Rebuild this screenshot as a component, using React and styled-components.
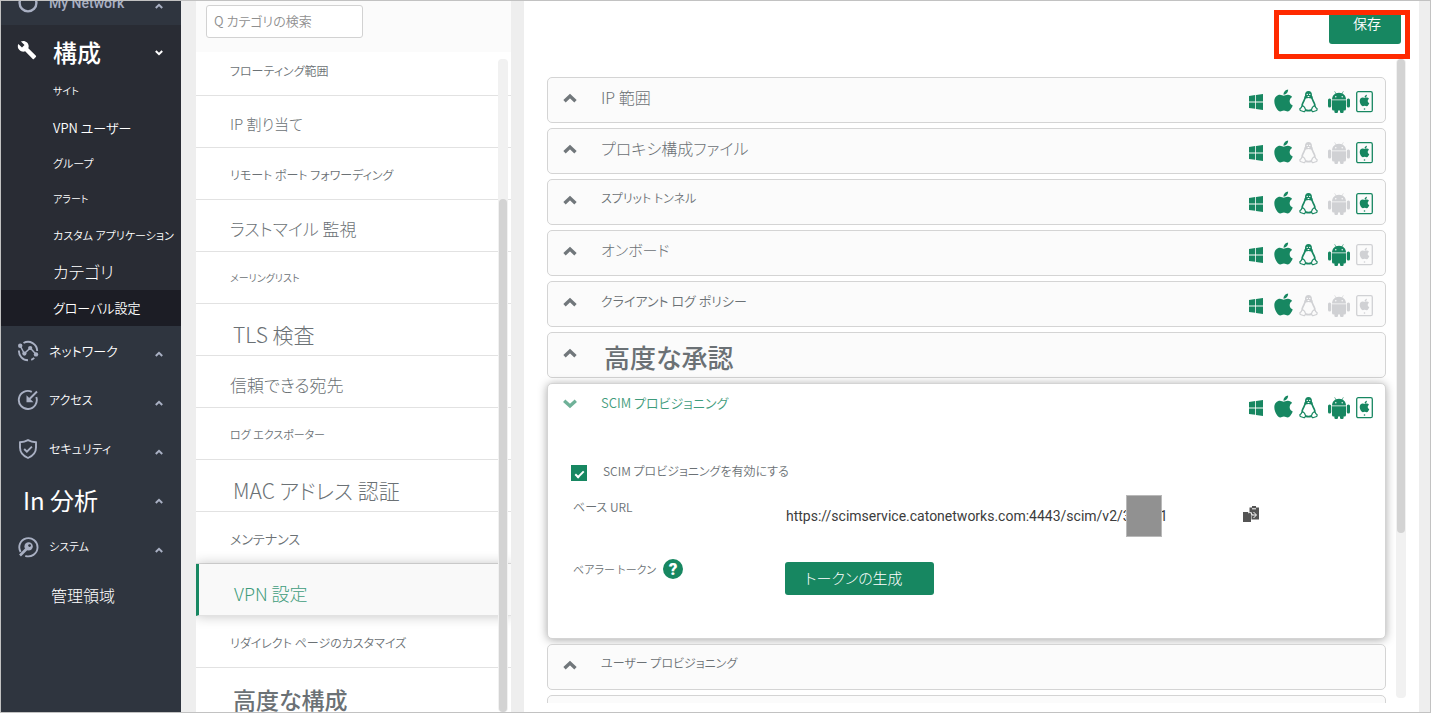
import React from "react";
import styled, { createGlobalStyle, css } from "styled-components";
import { MdBuild } from "react-icons/md";
import { FaApple } from "react-icons/fa";

const GREEN = "#178761";
const GREY = "#d0d1d4";
const NAV_ICON = "#a9b0c3";

const GlobalStyle = createGlobalStyle`
  *, *::before, *::after { box-sizing: border-box; }
  body {
    margin: 0;
    font-family: "Noto Sans CJK JP", "Liberation Sans", sans-serif;
    font-weight: 350;
    font-feature-settings: "palt";
    background: #eeeeee;
  }
  button, input {
    font: inherit;
    font-feature-settings: inherit;
    color: inherit;
    margin: 0;
  }
  button {
    border: 0;
    padding: 0;
    background: none;
    text-align: left;
  }
  a { color: inherit; text-decoration: none; }
`;

const Shell = styled.div`
  display: grid;
  grid-template-columns: 180px 315px minmax(0, 1fr);
  grid-template-rows: minmax(0, 1fr);
  height: 100vh;
  padding-right: 11px;
  border: 1px solid #c2c2c2;
  background: #eeeeee;
  overflow: hidden;
`;

/* ---------- text ---------- */

/* Small labels take a slightly stronger weight so that they stay legible. */
const Text = styled.span`
  font-size: ${(p) => p.$size}px;
  line-height: ${(p) => p.$size}px;
  font-weight: ${(p) => p.$weight || (p.$size >= 15 ? 300 : 350)};
  white-space: nowrap;
`;

/* Large labels are inset a little further than the others in a list. */
const ListText = styled(Text)`
  padding-left: ${(p) => (p.$size >= 20 ? 3 : 0)}px;
`;

/* ---------- side navigation ---------- */

const Sidebar = styled.nav`
  display: flex;
  flex-direction: column;
  background: #2f353f;
  color: #ffffff;
  overflow: hidden;
`;

const NavSection = styled.button`
  display: flex;
  align-items: center;
  flex: none;
  width: 100%;
  height: 49px;
  padding: 0 18px 0 ${(p) => (p.$wide ? 22 : 16)}px;
`;

const ScrolledSection = styled(NavSection)`
  margin-top: -25px;
  padding-top: 4px;
  font-family: Roboto, sans-serif;
  color: ${NAV_ICON};
`;

const NavLabel = styled(Text)`
  padding-top: ${(p) => (p.$size >= 20 ? 5 : 0)}px;
`;

const NavIcon = styled.span`
  display: flex;
  width: 22px;
  margin-right: ${(p) => (p.$wide ? 14 : 10)}px;
`;

const NavArrow = styled.span`
  display: flex;
  margin-left: auto;
  padding-top: 6px;
  color: ${(p) => (p.$light ? "#ffffff" : NAV_ICON)};
`;

const NavGroup = styled.div`
  flex: none;
  background: #292c34;
`;

const NavLink = styled.a`
  display: flex;
  align-items: center;
  height: 36px;
  padding: 0 0 2px 52px;
  background: ${(p) => (p.$active ? "#1c1d25" : "transparent")};
`;

const NavPlain = styled(NavLink)`
  flex: none;
  height: 49px;
  padding-left: 50px;
`;

/* ---------- category panel ---------- */

const Categories = styled.section`
  position: relative;
  display: flex;
  flex-direction: column;
  margin-left: 15px;
  width: 315px;
  background: #ffffff;
  overflow: hidden;
`;

const CategoryHeader = styled.div`
  z-index: 1;
  flex: none;
  height: 51px;
  padding: 4px 10px;
  background: #fbfbfb;
`;

const SearchBox = styled.input`
  display: block;
  width: 157px;
  height: 33px;
  padding: 0 7px 2px;
  border: 1px solid #d2d2d2;
  border-radius: 3px;
  background: #ffffff;
  font-size: 13px;
  outline: none;
  &::placeholder { color: #8f8f8f; opacity: 1; }
`;

const CategoryList = styled.div`
  margin-top: -8px;
`;

const CategoryRow = styled.a`
  display: flex;
  align-items: flex-start;
  height: 52px;
  padding: 20px 0 0 34px;
  border-bottom: 1px solid #e2e2e2;
  color: #6b7175;
  ${(p) =>
    p.$active &&
    css`
      position: relative;
      padding-left: 35px;
      border-left: 3px solid ${GREEN};
      background: #f9f9f9;
      color: #3f9c7c;
      box-shadow: 0 0 12px rgba(0, 0, 0, 0.24);
    `}
`;

const CategoryText = styled(ListText)`
  padding-top: ${(p) => (p.$size <= 12 ? 1 : 0)}px;
`;

const Track = styled.div`
  position: absolute;
  z-index: 2;
  top: 58px;
  bottom: ${(p) => p.$bottom}px;
  right: ${(p) => p.$right}px;
  width: 10px;
  padding: ${(p) => p.$before}px 1px ${(p) => p.$after}px;
  border-radius: 4px;
  background: #f1f1f1;
`;

const Thumb = styled.div`
  height: 100%;
  border-radius: 4px;
  background: #d3d3d3;
`;

/* ---------- settings panel ---------- */

const Main = styled.main`
  position: relative;
  display: flex;
  flex-direction: column;
  min-width: 0;
  margin-left: 28px;
  padding-bottom: 9px;
  background: #ffffff;
`;

const Toolbar = styled.header`
  display: flex;
  justify-content: flex-end;
  flex: none;
  height: 58px;
  padding: 10px 18px 0 0;
`;

const PrimaryButton = styled.button`
  display: flex;
  align-items: flex-start;
  height: 33px;
  padding: ${(p) => p.$padTop}px ${(p) => p.$padRight}px 0 ${(p) => p.$padLeft}px;
  border-radius: 3px;
  background: ${GREEN};
  color: #ffffff;
`;

const Highlight = styled.div`
  position: absolute;
  z-index: 3;
  top: 9px;
  right: 9px;
  width: 136px;
  height: 49px;
  border: 5px solid #ff2a00;
`;

const CardList = styled.div`
  display: flex;
  flex-direction: column;
  gap: 5px;
  flex: 1;
  min-height: 0;
  padding: 18px 33px 0 23px;
  overflow: hidden;
`;

const Card = styled.section`
  flex: none;
  border: 1px solid #d4d4d4;
  border-radius: 5px;
  background: #fbfbfb;
  color: #6b7175;
  ${(p) =>
    p.$open &&
    css`
      height: 256px;
      background: #ffffff;
      box-shadow: 0 1px 10px rgba(0, 0, 0, 0.34);
    `}
`;

const CardHeader = styled.button`
  display: flex;
  align-items: flex-start;
  width: 100%;
  height: 44px;
  padding: 11px 12px 0 15px;
`;

const CardArrow = styled.span`
  display: flex;
  width: 38px;
  padding-top: 4px;
  color: ${(p) => (p.$open ? "#6fb198" : "#71777b")};
`;

const CardTitle = styled(ListText)`
  padding-top: ${(p) => (p.$size <= 13 ? 1 : 0)}px;
  color: ${(p) => (p.$open ? "#3f9c7c" : "inherit")};
`;

const Platforms = styled.span`
  display: grid;
  grid-template-columns: 14px 24px 19px 26px 17px;
  column-gap: 6px;
  align-items: center;
  height: 22px;
  margin-left: auto;
`;

const Platform = styled.span`
  display: flex;
  justify-content: flex-end;
  color: ${(p) => (p.$on ? GREEN : GREY)};
`;

const CardBody = styled.div`
  display: flex;
  flex-direction: column;
  padding: 37px 126px 0 23px;
`;

const CheckRow = styled.label`
  display: flex;
  align-items: flex-start;
  gap: 16px;
  height: 18px;
`;

const Checkbox = styled.input`
  appearance: none;
  display: flex;
  align-items: center;
  justify-content: center;
  width: 16px;
  height: 16px;
  background: ${GREEN};
  &:checked::after {
    content: "";
    width: 9px;
    height: 5px;
    border: solid #ffffff;
    border-width: 0 0 2px 2px;
    transform: rotate(-45deg);
  }
`;

const Field = styled.div`
  display: grid;
  grid-template-columns: 214px minmax(0, 1fr);
  align-items: center;
  height: ${(p) => p.$height}px;
`;

const FieldLabel = styled.span`
  display: flex;
  align-items: center;
  gap: 7px;
  padding: 0 0 18px 2px;
`;

const UrlLine = styled.div`
  display: flex;
  align-items: center;
  padding-left: 1px;
  font-family: Roboto, sans-serif;
  font-size: 14px;
  font-weight: 400;
  color: #3c3c3c;
  white-space: nowrap;
`;

const Redaction = styled.span`
  z-index: 1;
  width: 36px;
  height: 42px;
  margin: 0 -2px 0 -5px;
  border: 1px solid #b9b9b9;
  background: #919191;
`;

const CopyButton = styled.button`
  display: flex;
  margin-left: auto;
  padding-bottom: 5px;
  color: #545454;
`;

const HelpButton = styled.button`
  width: 20px;
  height: 20px;
  border-radius: 50%;
  background: ${GREEN};
  color: #ffffff;
  font-family: Roboto, sans-serif;
  font-size: 17px;
  line-height: 20px;
  font-weight: 900;
  text-align: center;
`;

/* ---------- icons ---------- */

const SmallArrow = ({ down }) => (
  <svg width="8" height="6" viewBox="0 0 8 6" fill="none" stroke="currentColor" strokeWidth="2">
    <path d={down ? "M.8 1 4 4.2 7.2 1" : "M.8 5 4 1.8 7.2 5"} />
  </svg>
);

const BigArrow = ({ down }) => (
  <svg width="14" height="10" viewBox="0 0 14 10" fill="none" stroke="currentColor" strokeWidth="3.4">
    <path d={down ? "M1.200 1.800l5.800 5.200 5.800-5.200" : "M1.500 8.200 7 3l5.500 5.200"} />
  </svg>
);

const RingIcon = () => (
  <svg width="22" height="22" viewBox="0 0 22 22" fill="none" stroke={NAV_ICON} strokeWidth="2.4">
    <circle cx="11" cy="11" r="8.400" />
  </svg>
);

const NetworkIcon = () => (
  <svg width="22" height="22" viewBox="0 0 22 22" fill="none" stroke={NAV_ICON} strokeWidth="1.900">
    <path d="M6.500 3A9.200 9.200 0 0 1 20.200 11M17.200 17.800a9.200 9.200 0 0 1-3 2M11 20.200A9.200 9.200 0 0 1 1.900 10.500" />
    <path d="M3.300 6l4 7.500 6-5.500 5.700 6.200" strokeWidth="1.500" />
    <g fill={NAV_ICON} stroke="none">
      <circle cx="3.200" cy="5.800" r="2.200" />
      <circle cx="7.400" cy="13.600" r="2.100" />
      <circle cx="13.200" cy="8" r="2.100" />
      <circle cx="19" cy="14.400" r="2.200" />
    </g>
  </svg>
);

const AccessIcon = () => (
  <svg width="22" height="22" viewBox="0 0 22 22" fill="none" stroke={NAV_ICON} strokeWidth="1.900">
    <path d="M14.800 2.900A9 9 0 1 0 19.300 8" />
    <path d="M20 2.500l-8 8" />
    <path d="M9.500 6.200v7h7z" fill={NAV_ICON} stroke="none" />
  </svg>
);

const ShieldIcon = () => (
  <svg width="22" height="22" viewBox="0 0 22 22" fill="none" stroke={NAV_ICON} strokeWidth="1.900">
    <path d="M11 2.200c2.500 1.400 5 2 8 2.100v5.200c0 4.900-2.900 8.300-8 10.500-5.100-2.200-8-5.600-8-10.500V4.300c3-.1 5.500-.7 8-2.100z" />
    <path d="M7.200 11l2.700 2.600 5-5" />
  </svg>
);

const SystemIcon = () => (
  <svg width="22" height="22" viewBox="0 0 22 22" fill="none" stroke={NAV_ICON} strokeWidth="1.900">
    <path d="M3.600 15.900A9.100 9.100 0 1 1 8.300 19.800" />
    <path d="M3 19.500l6.500-6.500" strokeWidth="2.600" />
    <circle cx="11.600" cy="10.400" r="4.200" fill={NAV_ICON} stroke="none" />
    <circle cx="12.600" cy="9.600" r="1.400" fill="#2f353f" stroke="none" />
  </svg>
);

const WindowsIcon = () => (
  <svg width="14" height="16" viewBox="0 0 14 16" fill="currentColor">
    <path d="M0 2l6.200-.9v6.400H0zM7 1l7-1v7.500H7zM0 8.400h6.200v6.400L0 14zM7 8.400h7V16l-7-1z" />
  </svg>
);

const AppleIcon = () => (
  <svg width="20" height="25" viewBox="0 0 20 25">
    <FaApple x="-2" y="-1" size={25} />
  </svg>
);

const LinuxIcon = () => (
  <svg width="20" height="23" viewBox="0 0 20 23" fill="none" stroke="currentColor" strokeWidth="1.300" strokeLinejoin="round">
    <path d="M6.700 6C7 9 4 11.500 3.200 15.500M13.300 6c-.3 3 2.700 5.500 3.500 9.500M7 20.600c2 .7 4 .7 6 0" strokeWidth="1.800" />
    <path d="M6.300 5.500C6.100 2.300 7.500.4 10 .4s3.900 1.900 3.700 5.100l.6 3.200L10 7.700 5.700 8.700z" fill="currentColor" stroke="none" />
    <path d="M3.400 15.500l-1 2.300-1.600 1.500.6 1.700 4 1.300 1.800-1.600-1.500-3.300zM16.600 15.500l1 2.300 1.600 1.500-.6 1.700-4 1.300-1.800-1.600 1.500-3.300z" />
    <circle cx="8.700" cy="4" r=".7" fill="#fff" stroke="none" />
    <circle cx="11.300" cy="4" r=".7" fill="#fff" stroke="none" />
    <path d="M8.500 5.700h3L10 7z" fill="#fff" stroke="none" />
  </svg>
);

const AndroidIcon = () => (
  <svg width="22" height="22" viewBox="0 0 22 22" fill="currentColor">
    <path d="M4 8.500C4.200 4.600 6.800 1.800 11 1.800s6.800 2.800 7 6.700z" />
    <path d="M6.600.3l1.700 2.700M15.400.3l-1.700 2.700" stroke="currentColor" strokeWidth=".6" />
    <path d="M4 9.300h14v8.700a1.500 1.500 0 0 1-1.500 1.500h-11A1.500 1.500 0 0 1 4 18z" />
    <rect x="0" y="7.500" width="3.200" height="9" rx="1.500" />
    <rect x="18.800" y="7.500" width="3.200" height="9" rx="1.500" />
    <rect x="6.400" y="17" width="3.600" height="5" rx="1.200" />
    <rect x="12" y="17" width="3.600" height="5" rx="1.200" />
    <circle cx="7.800" cy="5.700" r=".7" fill="#fff" />
    <circle cx="14.200" cy="5.700" r=".7" fill="#fff" />
  </svg>
);

const TabletIcon = () => (
  <svg width="17" height="22" viewBox="0 0 17 22" fill="none">
    <rect x=".7" y=".7" width="15.600" height="20" rx="1.500" stroke="currentColor" strokeWidth="1.300" />
    <circle cx="8.500" cy="18" r=".8" fill="currentColor" />
    <FaApple x="2" y="3" size={13} color="currentColor" />
  </svg>
);

const CopyIcon = () => (
  <svg width="16" height="16" viewBox="0 0 16 16" fill="currentColor">
    <path d="M0 6h8v10H0zM6.500 1.500H9V0h4v1.500h3v12H8.500V6h-2z" />
    <path d="M5 6.800c2.500-.8 4 .3 4 2.200h4M10.500 6l3 3-3 3M9 2.800h4" fill="none" stroke="#fff" strokeWidth="1" />
  </svg>
);

/* ---------- data ---------- */

const configLinks = [
  ["サイト", 10],
  ["VPN ユーザー", 13],
  ["グループ", 11],
  ["アラート", 10],
  ["カスタム アプリケーション", 11],
  ["カテゴリ", 17],
  ["グローバル設定", 13],
];

const categories = [
  ["フローティング範囲", 12],
  ["IP 割り当て", 15],
  ["リモート ポート フォワーディング", 12],
  ["ラストマイル 監視", 17],
  ["メーリングリスト", 10],
  ["TLS 検査", 21],
  ["信頼できる宛先", 17],
  ["ログ エクスポーター", 11],
  ["MAC アドレス 認証", 21],
  ["メンテナンス", 13],
  ["VPN 設定", 18],
  ["リダイレクト ページのカスタマイズ", 12],
  ["高度な構成", 23, 500],
];

const cardsAbove = [
  ["IP 範囲", 16, "11111"],
  ["プロキシ構成ファイル", 16, "11001"],
  ["スプリット トンネル", 12, "11101"],
  ["オンボード", 15, "11110"],
  ["クライアント ログ ポリシー", 13, "11000"],
  ["高度な承認", 26, "", 500],
];

const platformIcons = [WindowsIcon, AppleIcon, LinuxIcon, AndroidIcon, TabletIcon];

const SettingHeader = ({ title, size, weight, flags, open }) => (
  <CardHeader type="button" aria-expanded={!!open}>
    <CardArrow $open={open}>
      <BigArrow down={open} />
    </CardArrow>
    <CardTitle $size={size} $weight={weight} $open={open}>
      {title}
    </CardTitle>
    {flags && (
      <Platforms>
        {platformIcons.map((Icon, i) => (
          <Platform key={i} $on={flags[i] === "1"}>
            <Icon />
          </Platform>
        ))}
      </Platforms>
    )}
  </CardHeader>
);

const Section = ({ icon, label, size, weight, wide }) => (
  <NavSection type="button" $wide={wide}>
    {icon && <NavIcon>{icon}</NavIcon>}
    <NavLabel $size={size} $weight={weight}>{label}</NavLabel>
    <NavArrow>
      <SmallArrow />
    </NavArrow>
  </NavSection>
);

export default function App() {
  return (
    <>
      <GlobalStyle />
      <Shell>
        <Sidebar>
          <ScrolledSection type="button">
            <NavIcon><RingIcon /></NavIcon>
            <NavLabel $size={14} $weight={500}>My Network</NavLabel>
            <NavArrow><SmallArrow /></NavArrow>
          </ScrolledSection>
          <NavGroup>
            <NavSection type="button">
              <NavIcon $wide><MdBuild size={20} /></NavIcon>
              <NavLabel $size={24} $weight={500}>構成</NavLabel>
              <NavArrow $light><SmallArrow down /></NavArrow>
            </NavSection>
            {configLinks.map(([label, size], i) => (
              <NavLink href="#" key={label} $active={i === configLinks.length - 1}>
                <NavLabel $size={size}>{label}</NavLabel>
              </NavLink>
            ))}
          </NavGroup>
          <Section icon={<NetworkIcon />} label="ネットワーク" size={13} />
          <Section icon={<AccessIcon />} label="アクセス" size={12} />
          <Section icon={<ShieldIcon />} label="セキュリティ" size={12} />
          <Section wide label="In 分析" size={24} weight={400} />
          <Section icon={<SystemIcon />} label="システム" size={11} />
          <NavPlain href="#">
            <NavLabel $size={16}>管理領域</NavLabel>
          </NavPlain>
        </Sidebar>

        <Categories>
          <CategoryHeader>
            <SearchBox type="text" placeholder="Q カテゴリの検索" />
          </CategoryHeader>
          <CategoryList>
            {categories.map(([label, size, weight]) => (
              <CategoryRow href="#" key={label} $active={label === "VPN 設定"}>
                <CategoryText $size={size} $weight={weight}>{label}</CategoryText>
              </CategoryRow>
            ))}
          </CategoryList>
          <Track $bottom={0} $right={3} $before={140} $after={0}>
            <Thumb />
          </Track>
        </Categories>

        <Main>
          <Toolbar>
            <PrimaryButton type="button" $padTop={5} $padLeft={24} $padRight={20}>
              <Text $size={14}>保存</Text>
            </PrimaryButton>
          </Toolbar>
          <Highlight />
          <CardList>
            {cardsAbove.map(([title, size, flags, weight]) => (
              <Card key={title}>
                <SettingHeader title={title} size={size} flags={flags} weight={weight} />
              </Card>
            ))}
            <Card $open>
              <SettingHeader title="SCIM プロビジョニング" size={13} flags="11111" open />
              <CardBody>
                <CheckRow>
                  <Checkbox type="checkbox" defaultChecked />
                  <Text $size={12}>SCIM プロビジョニングを有効にする</Text>
                </CheckRow>
                <Field $height={66}>
                  <FieldLabel>
                    <Text $size={12}>ベース URL</Text>
                  </FieldLabel>
                  <UrlLine>
                    https://scimservice.catonetworks.com:4443/scim/v2/3
                    <Redaction />1
                    <CopyButton type="button"><CopyIcon /></CopyButton>
                  </UrlLine>
                </Field>
                <Field $height={58}>
                  <FieldLabel>
                    <Text $size={11}>ベアラー トークン</Text>
                    <HelpButton type="button">?</HelpButton>
                  </FieldLabel>
                  <div>
                    <PrimaryButton type="button" $padTop={8} $padLeft={20} $padRight={31}>
                      <Text $size={15}>トークンの生成</Text>
                    </PrimaryButton>
                  </div>
                </Field>
              </CardBody>
            </Card>
            <Card>
              <SettingHeader title="ユーザー プロビジョニング" size={12} />
            </Card>
            <Card>
              <SettingHeader title="" size={12} />
            </Card>
          </CardList>
          <Track $bottom={14} $right={13} $before={0} $after={165}>
            <Thumb />
          </Track>
        </Main>
      </Shell>
    </>
  );
}
